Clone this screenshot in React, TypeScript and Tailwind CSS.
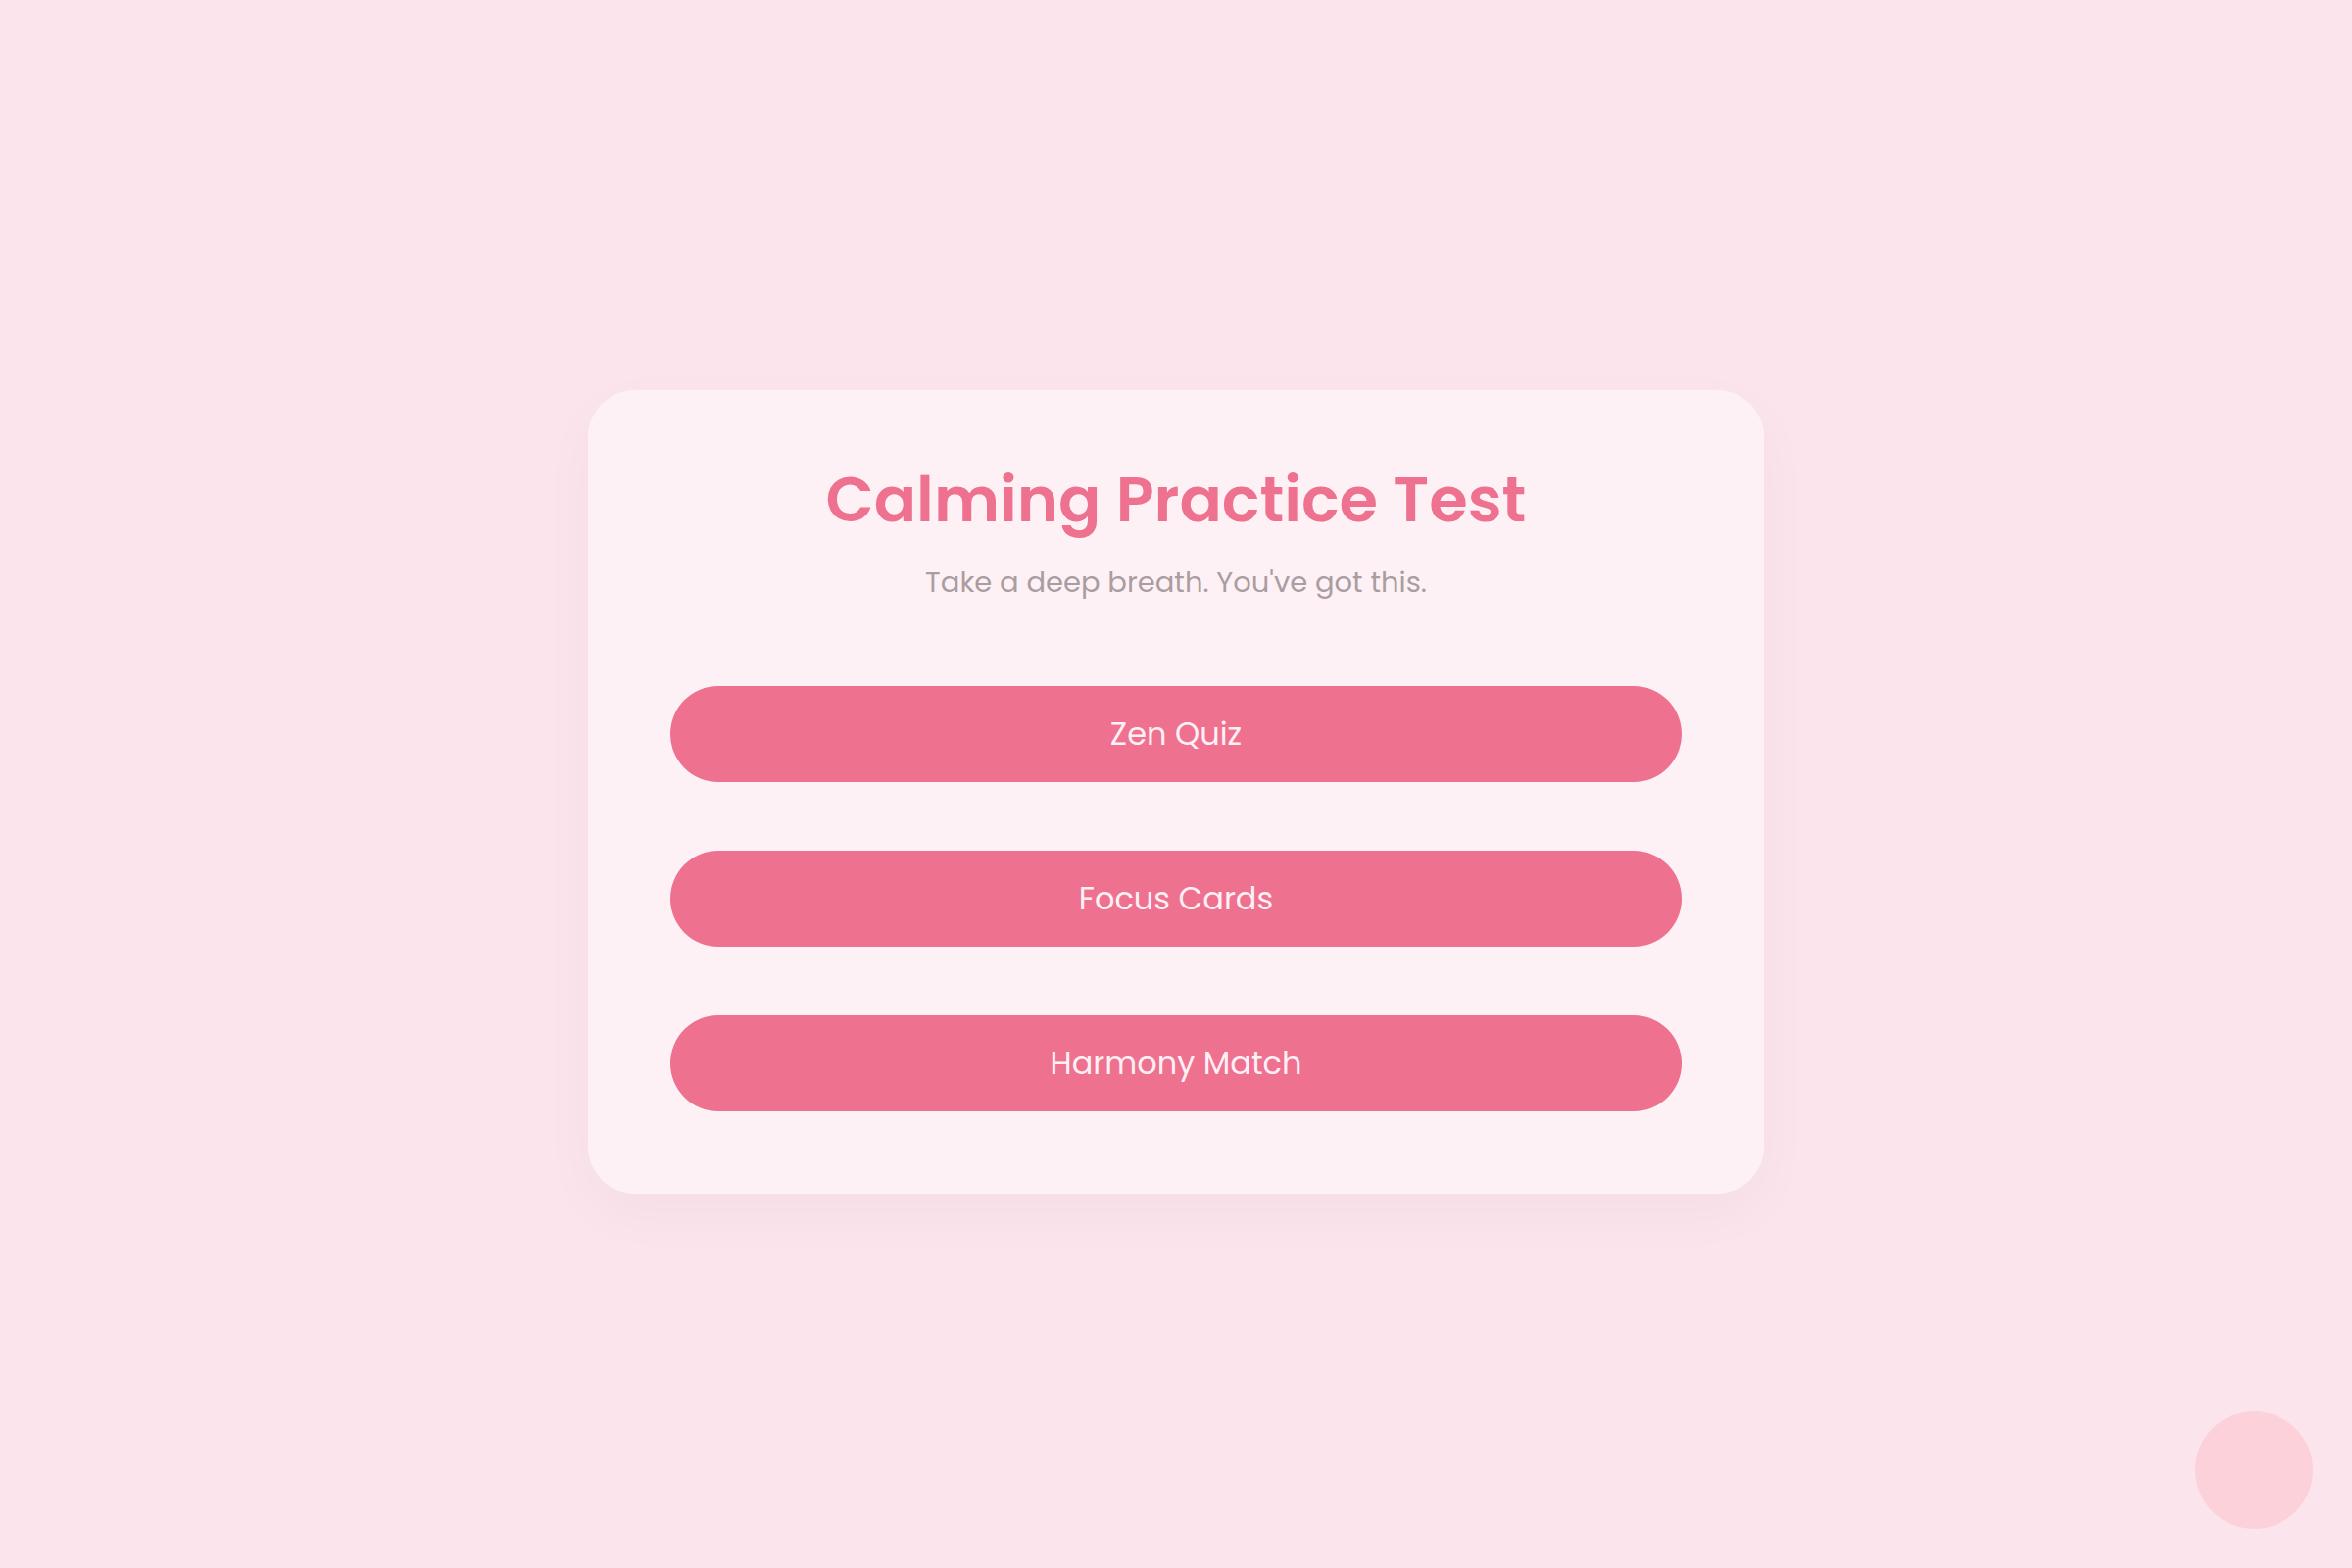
const modes = ['Zen Quiz', 'Focus Cards', 'Harmony Match']

const App = () => {
  return (
    <div className="relative flex min-h-screen flex-col items-center justify-center bg-[#fce4ec] font-['Poppins','Inter',sans-serif]">
      <main className="mt-4 flex w-1/2 flex-col rounded-[48px] bg-[#fef1f5] p-[84px] pt-[72px] text-center shadow-[0_20px_60px_rgba(0,0,0,0.03)]">
        <h1 className="text-[64px] leading-[80px] font-semibold text-[#ee718f]">Calming Practice Test</h1>
        <p className="mt-[22px] text-[29px] leading-[44px] text-[#aa9da1]">Take a deep breath. You've got this.</p>
        <nav className="mt-[84px] flex flex-col gap-[70px]">
          {modes.map((mode) => (
            <button
              key={mode}
              type="button"
              className="h-[98px] rounded-full bg-[#ee718f] text-[32px] leading-[48px] text-[#fff0f5]">
              {mode}
            </button>
          ))}
        </nav>
      </main>
      <div className="absolute right-10 bottom-10 size-[120px] rounded-full bg-[#fdd1da]" />
    </div>
  )
}

export default App
